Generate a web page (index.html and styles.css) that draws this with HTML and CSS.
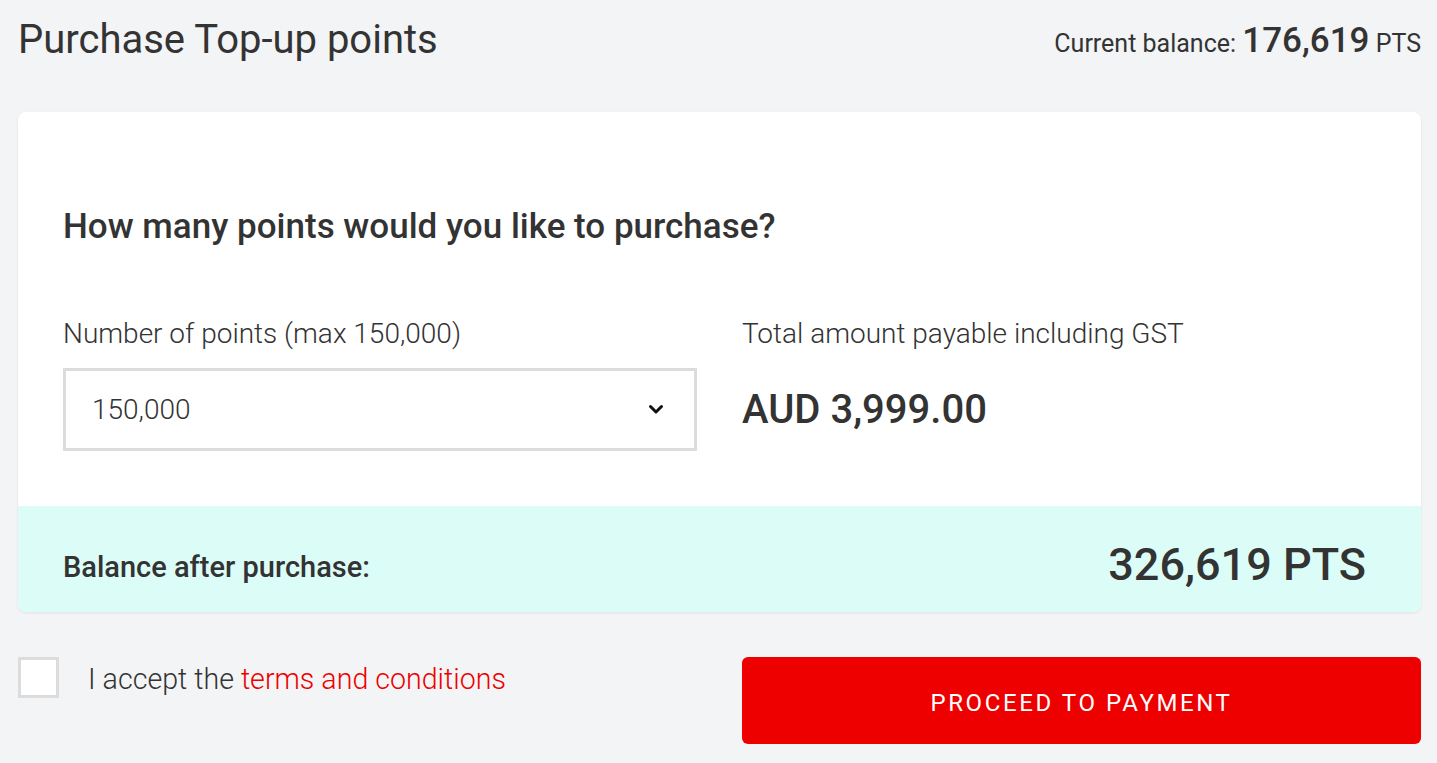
FILE: index.html
```html
<!doctype html>
<html lang="en">
<head>
    <meta charset="utf-8">
    <title>Purchase Top-up points</title>
    <link rel="stylesheet" href="styles.css">
</head>
<body>

    <!-- header -->
    <div class="Header">
        <h1 class="Header-title">Purchase Top-up points</h1>
        <div class="Header-balance">
            Current balance: <span class="Header-amount">176,619</span> <span class="Header-unit">PTS</span>
        </div>
    </div>

    <!-- purchase card -->
    <div class="Card">
        <div class="Card-body">
            <h2 class="Card-question">How many points would you like to purchase?</h2>
            <div class="Columns">
                <div>
                    <div class="Field-label">Number of points (max 150,000)</div>
                    <div class="Select">
                        <span>150,000</span>
                        <svg class="Select-chevron" width="16" height="11" viewBox="0 0 16 11">
                            <path d="M2.5 2.5 L8 8 L13.5 2.5" fill="none" stroke="#111" stroke-width="3" stroke-linecap="round" stroke-linejoin="round" />
                        </svg>
                    </div>
                </div>
                <div>
                    <div class="Field-label">Total amount payable including GST</div>
                    <div class="Total">AUD 3,999.00</div>
                </div>
            </div>
        </div>
        <div class="Card-footer">
            <div class="Card-footerLabel">Balance after purchase:</div>
            <div class="Card-footerValue">326,619 PTS</div>
        </div>
    </div>

    <!-- actions -->
    <div class="Actions">
        <label class="Terms">
            <span class="Terms-box"></span>
            <span class="Terms-text">I accept the <a href="#" class="Terms-link">terms and conditions</a></span>
        </label>
        <button class="PayButton">PROCEED TO PAYMENT</button>
    </div>

</body>
</html>
```

FILE: styles.css
```css
*, *:before, *:after {
    box-sizing: border-box;
    margin: 0;
    padding: 0;
}

* {
    font-family: Roboto, "Liberation Sans", sans-serif;
}

html {
    background: #f3f4f6;
    color: #333;
}

body {
    padding: 0 16px 0 18px;
}

.Header {
    display: flex;
    justify-content: space-between;
    align-items: center;
    height: 78px;
    margin-bottom: 34px;
}

.Header-title {
    font-size: 40px;
    font-weight: 400;
}

.Header-balance {
    font-size: 25px;
    font-weight: 400;
    padding-top: 3px;
}

.Header-amount {
    font-size: 35px;
    font-weight: 500;
}

.Header-unit {
    font-size: 25px;
}

.Card {
    background: #fff;
    border-radius: 8px;
    box-shadow: 0 1px 3px rgba(0, 0, 0, 0.08);
    overflow: hidden;
}

.Card-body {
    padding: 95px 45px 55px 45px;
}

.Card-question {
    font-size: 35px;
    font-weight: 500;
    line-height: 40px;
    margin-bottom: 71px;
}

.Columns {
    display: grid;
    grid-template-columns: 1fr 1fr;
    column-gap: 45px;
}

.Field-label {
    font-size: 28px;
    font-weight: 300;
    line-height: 32px;
    margin-bottom: 18px;
}

.Select {
    display: flex;
    justify-content: space-between;
    align-items: center;
    height: 83px;
    padding: 0 30px 0 26px;
    border: 3px solid #dcdcdc;
    font-size: 28px;
    font-weight: 300;
}

.Total {
    display: flex;
    align-items: center;
    height: 83px;
    font-size: 40px;
    font-weight: 500;
}

.Card-footer {
    display: flex;
    justify-content: space-between;
    align-items: center;
    height: 106px;
    padding: 10px 55px 0 45px;
    background: #dcfdf7;
}

.Card-footerLabel {
    font-size: 29px;
    font-weight: 500;
    padding-top: 6px;
}

.Card-footerValue {
    font-size: 45px;
    font-weight: 500;
}

.Actions {
    display: grid;
    grid-template-columns: 1fr 1fr;
    column-gap: 45px;
    margin-top: 45px;
}

.Terms {
    display: flex;
    align-items: flex-start;
    gap: 29px;
    font-size: 28.6px;
    font-weight: 300;
}

.Terms-box {
    width: 41px;
    height: 41px;
    border: 3px solid #dcdcdc;
    background: #fff;
    flex: none;
}

.Terms-text {
    line-height: 44px;
}

.Terms-link {
    color: #ee0000;
    text-decoration: none;
}

.PayButton {
    height: 87px;
    padding-top: 5px;
    border: none;
    border-radius: 6px;
    background: #ee0000;
    color: #fff;
    font-size: 24px;
    font-weight: 400;
    letter-spacing: 2.6px;
}
```
